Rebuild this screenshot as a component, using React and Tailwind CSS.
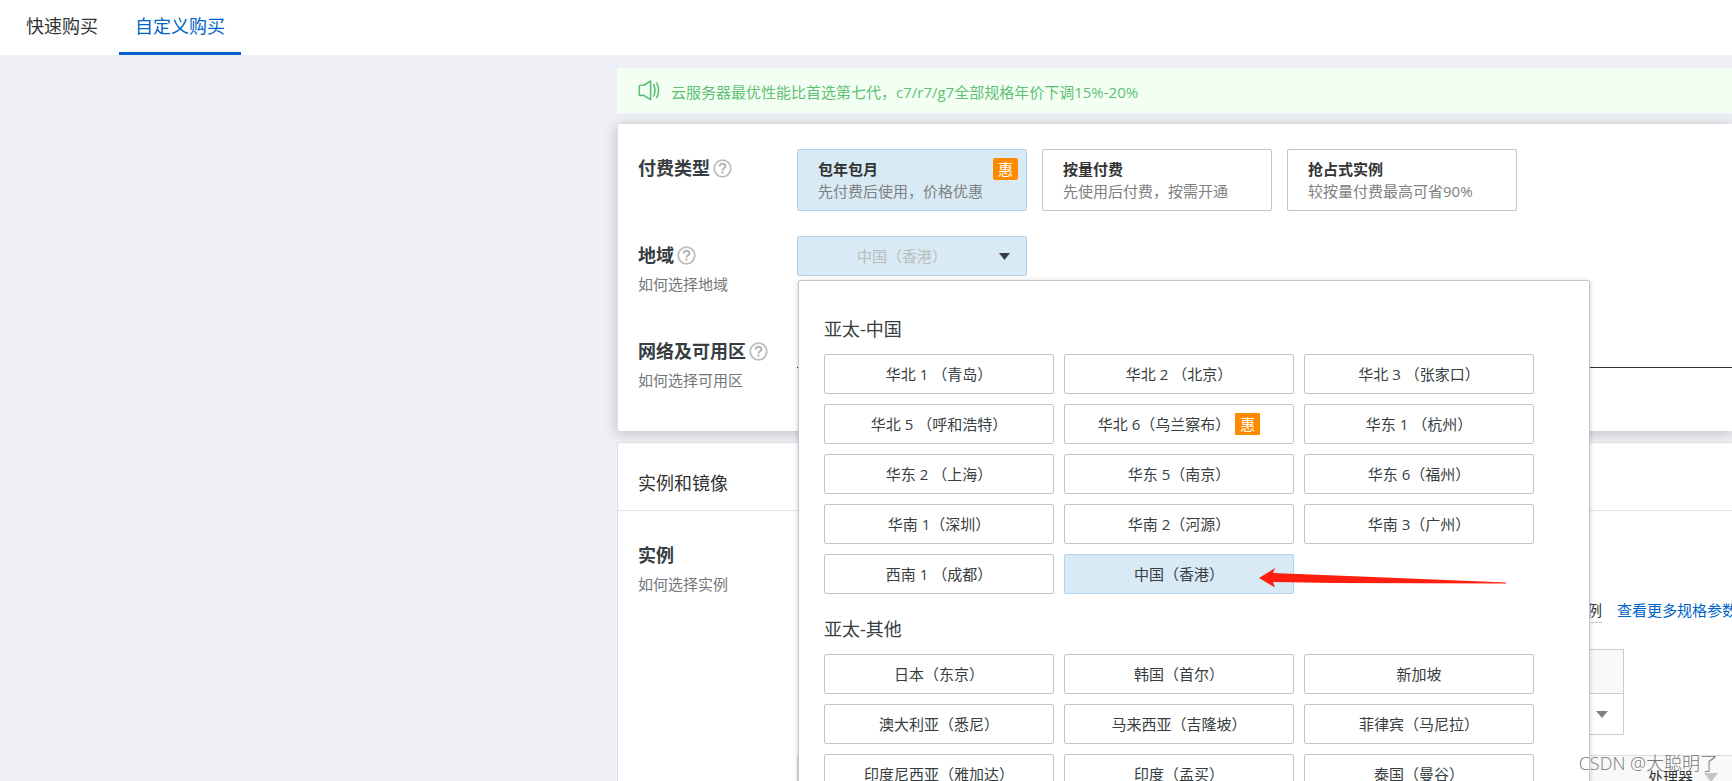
import React, { useState } from 'react'
import clsx from 'clsx'

const payTypes = [
  { title: '包年包月', desc: '先付费后使用，价格优惠', discount: true },
  { title: '按量付费', desc: '先使用后付费，按需开通' },
  { title: '抢占式实例', desc: '较按量付费最高可省90%' },
]

const regionGroups = [
  {
    title: '亚太-中国',
    regions: [
      { name: '华北 1 （青岛）' },
      { name: '华北 2 （北京）' },
      { name: '华北 3 （张家口）' },
      { name: '华北 5 （呼和浩特）' },
      { name: '华北 6（乌兰察布）', discount: true },
      { name: '华东 1 （杭州）' },
      { name: '华东 2 （上海）' },
      { name: '华东 5（南京）' },
      { name: '华东 6（福州）' },
      { name: '华南 1（深圳）' },
      { name: '华南 2（河源）' },
      { name: '华南 3（广州）' },
      { name: '西南 1 （成都）' },
      { name: '中国（香港）', pointer: true },
    ],
  },
  {
    title: '亚太-其他',
    regions: [
      { name: '日本（东京）' },
      { name: '韩国（首尔）' },
      { name: '新加坡' },
      { name: '澳大利亚（悉尼）' },
      { name: '马来西亚（吉隆坡）' },
      { name: '菲律宾（马尼拉）' },
      { name: '印度尼西亚（雅加达）' },
      { name: '印度（孟买）' },
      { name: '泰国（曼谷）' },
    ],
  },
]

const HelpIcon = () => (
  <svg className="ml-[3px] h-[19px] w-[19px] shrink-0" viewBox="0 0 19 19" fill="none">
    <circle cx="9.5" cy="9.5" r="8.3" stroke="#bdbdbd" strokeWidth="1.8" />
    <path
      d="M6.6 7.500c0-1.700 1.200-2.700 2.900-2.700s2.900 1 2.900 2.500c0 2-2.900 2-2.900 4.100"
      stroke="#b5b5b5"
      strokeWidth="2"
    />
    <rect x="8.5" y="12.500" width="2" height="2" fill="#b5b5b5" />
  </svg>
)

const SpeakerIcon = () => (
  <svg
    className="h-[22px] w-[22px] shrink-0"
    viewBox="0 0 22 22"
    fill="none"
    stroke="#5fbf75"
    strokeWidth="1.6"
    strokeLinejoin="round"
    strokeLinecap="round"
  >
    <path d="M2.300 5.200h3.500L12.600 1v18.600L5.800 15.400H2.300c-.6 0-1-.4-1-1V6.200c0-.6.4-1 1-1z" />
    <path d="M15.800 4.600c1.500 3.600 1.500 7.800 0 11.400" />
    <path d="M18.800 3c2.200 4.600 2.200 10 0 14.600" />
  </svg>
)

const PointerArrow = () => (
  <svg
    className="pointer-events-none absolute top-[13px] left-[194px] z-10 h-5 w-[248px]"
    viewBox="0 0 248 20"
  >
    <path
      d="M0 10L16 0l-2 5 100 4 133 5.500v1L75 15l-61-1 2 5.500z"
      fill="#ff1f0f"
    />
  </svg>
)

const Discount = ({ className }) => (
  <span
    className={clsx(
      'flex h-[22px] w-[25px] items-center justify-center bg-[#ff8a00] text-[15px] text-white',
      className
    )}
  >
    惠
  </span>
)

const Row = ({ label, help, link, className, children }) => (
  <div className={clsx('flex', className)}>
    <div className="w-[159px] shrink-0">
      <div className="flex h-[38px] items-center text-[18px] font-bold text-[#373d41]">
        {label}
        {help && <HelpIcon />}
      </div>
      {link && (
        <a href="#" className="block text-[15px] leading-5 text-[#73777a]">
          {link}
        </a>
      )}
    </div>
    <div className="min-w-0 flex-1">{children}</div>
  </div>
)

const RegionPanel = ({ region, onSelect }) => (
  <div className="absolute top-11 left-px z-20 w-[792px] rounded-[2px] border border-[#c1c5cd] bg-white px-[25px] pt-9 pb-6 shadow-[0_1px_5px_rgba(0,0,0,0.2)]">
    {regionGroups.map(({ title, regions }) => (
      <div key={title} className="mb-[23px]">
        <h3 className="mb-[13px] text-[18px] leading-6 text-[#373d41]">{title}</h3>
        <div className="grid grid-cols-[230px_230px_230px] gap-[10px]">
          {regions.map(({ name, discount, pointer }) => (
            <button
              key={name}
              onClick={() => onSelect(name)}
              className={clsx(
                'relative flex h-10 items-center justify-center rounded-[2px] border text-[15px] text-[#373d41]',
                region == name ? 'border-[#b0d3ef] bg-[#d8eaf6]' : 'border-[#c1c5cd] bg-white'
              )}
            >
              {name}
              {discount && <Discount className="ml-[5px]" />}
              {pointer && <PointerArrow />}
            </button>
          ))}
        </div>
      </div>
    ))}
  </div>
)

const App = () => {
  const [tab, setTab] = useState('自定义购买')
  const [payType, setPayType] = useState('包年包月')
  const [region, setRegion] = useState('中国（香港）')

  return (
    <div className="relative flex h-screen flex-col overflow-hidden bg-[#eff0f5] font-['Open_Sans','Noto_Sans_CJK_SC',sans-serif] text-[#333]">
      <nav className="flex h-[55px] shrink-0 gap-[5px] bg-white pl-[10px]">
        {['快速购买', '自定义购买'].map((item) => (
          <button
            key={item}
            onClick={() => setTab(item)}
            className={clsx(
              'border-b-[3px] px-4 text-[18px]',
              tab == item ? 'border-[#0064c8] text-[#0064c8]' : 'border-transparent'
            )}
          >
            {item}
          </button>
        ))}
      </nav>

      <main className="ml-[617px] flex min-w-0 flex-1 flex-col pt-[13px]">
        <div className="flex h-[45px] shrink-0 items-center gap-[11px] bg-[#f3fff3] pl-[21px] text-[15px] whitespace-nowrap text-[#5fbf75]">
          <SpeakerIcon />
          <span className="pt-[3px]">
            云服务器最优性能比首选第七代，c7/r7/g7全部规格年价下调15%-20%
          </span>
        </div>

        <section className="relative z-10 mt-[11px] flex shrink-0 flex-col gap-[25px] rounded-l-[2px] border-l border-[#dcdee3] bg-white pt-[25px] pb-[41px] pl-5 shadow-[0_2px_14px_rgba(0,0,0,0.22)]">
          <Row label="付费类型" help>
            <div className="flex gap-[15px]">
              {payTypes.map(({ title, desc, discount }) => (
                <button
                  key={title}
                  onClick={() => setPayType(title)}
                  className={clsx(
                    'relative h-[62px] w-[230px] shrink-0 rounded-[2px] border pl-5 text-left text-[15px] leading-[22px]',
                    payType == title ? 'border-[#b0d3ef] bg-[#d8eaf6]' : 'border-[#c1c5cd] bg-white'
                  )}
                >
                  <span className="block font-bold">{title}</span>
                  <span className="block text-[#808080]">{desc}</span>
                  {discount && <Discount className="absolute top-2 right-2 rounded-[2px]" />}
                </button>
              ))}
            </div>
          </Row>

          <Row label="地域" help link="如何选择地域" className="min-h-[71px]">
            <div className="relative w-[230px]">
              <select
                aria-label="地域"
                value={region}
                onChange={(e) => setRegion(e.target.value)}
                className="block h-10 w-full appearance-none rounded-[2px] border border-[#b0d3ef] bg-[#d8eaf6] pr-5 text-center text-[15px] text-[#bbb] [text-align-last:center]"
              >
                {regionGroups.map(({ title, regions }) => (
                  <optgroup key={title} label={title}>
                    {regions.map(({ name }) => (
                      <option key={name}>{name}</option>
                    ))}
                  </optgroup>
                ))}
              </select>
              <svg
                className="pointer-events-none absolute top-[17px] right-[17px] h-[7px] w-[11px]"
                viewBox="0 0 11 7"
              >
                <path d="M0 0h11L5.500 7z" fill="#373d41" />
              </svg>
              <RegionPanel region={region} onSelect={setRegion} />
            </div>
          </Row>

          <Row label="网络及可用区" help link="如何选择可用区">
            <div className="h-9 border-b border-[#333]" />
          </Row>
        </section>

        <section className="mt-[11px] min-h-0 flex-1 rounded-tl-[2px] border-t border-l border-[#dfe1e6] bg-white">
          <h2 className="border-b border-[#e0e2e6] pt-7 pb-[15px] pl-5 text-[18px] leading-6">
            实例和镜像
          </h2>
          <Row label="实例" link="如何选择实例" className="pt-[25px] pl-5">
            <div className="flex gap-[15px] pt-16 pl-[790px] text-[15px] leading-5 whitespace-nowrap">
              <span className="border-b border-dashed border-[#bbb] pb-[2px]">例</span>
              <a href="#" className="text-[#0064c8]">
                查看更多规格参数
              </a>
            </div>
            <div className="mt-[26px] ml-px w-[826px] border border-[#ccc]">
              <div className="h-11 border-b border-[#ccc] bg-[#f9f9f9]" />
              <div className="flex h-10 items-center justify-end pr-[15px]">
                <svg className="h-[7px] w-3" viewBox="0 0 12 7">
                  <path d="M0 0h12L6 7z" fill="#808080" />
                </svg>
              </div>
            </div>
            <div className="mt-5 flex h-11 items-center gap-[11px] border-t border-l border-[#dcdee3] bg-[#f9f9f9] pl-[850px] text-[15px] whitespace-nowrap">
              <span>处理器</span>
              <svg className="h-[9px] w-[14px]" viewBox="0 0 14 9">
                <path d="M0 0h14L7 9z" fill="#c4c4c4" />
              </svg>
            </div>
          </Row>
        </section>
      </main>

      <span className="pointer-events-none absolute right-[14px] bottom-[6px] z-30 text-[18px] leading-6 font-light text-[#777]">
        CSDN @大聪明了
      </span>
    </div>
  )
}

export default App
